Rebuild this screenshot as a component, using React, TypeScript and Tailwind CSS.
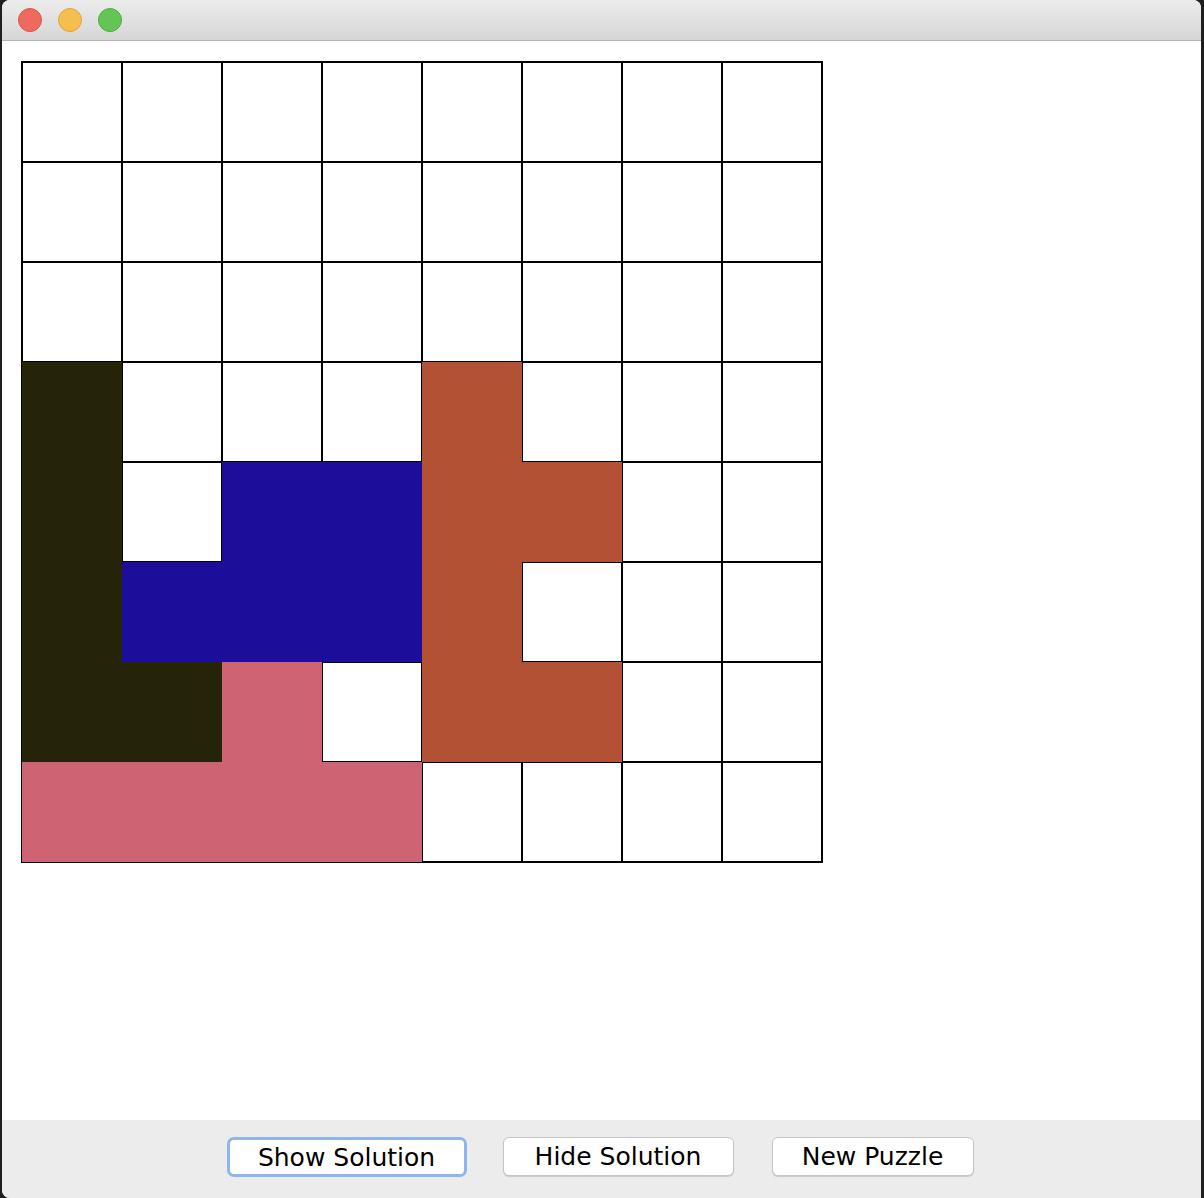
import React from "react"

// 0 = empty, 1 = dark, 2 = blue, 3 = brown, 4 = pink
const board: number[][] = [
    [0, 0, 0, 0, 0, 0, 0, 0],
    [0, 0, 0, 0, 0, 0, 0, 0],
    [0, 0, 0, 0, 0, 0, 0, 0],
    [1, 0, 0, 0, 3, 0, 0, 0],
    [1, 0, 2, 2, 3, 3, 0, 0],
    [1, 2, 2, 2, 3, 0, 0, 0],
    [1, 1, 4, 0, 3, 3, 0, 0],
    [4, 4, 4, 4, 0, 0, 0, 0],
]

const fills: Record<number, string> = {
    1: "bg-[#252308]",
    2: "bg-[#1c0d9a]",
    3: "bg-[#b25134]",
    4: "bg-[#cd6373]",
}

function Cell({ v }: { v: number }) {
    if (v === 0) {
        return <div className="h-[100px] w-[100px] border border-black bg-white" />
    }
    return <div className={`h-[100px] w-[100px] ${fills[v]}`} />
}

function TrafficLights() {
    return (
        <div className="flex items-center gap-[16px] pl-[16px]">
            <span className="h-[24px] w-[24px] rounded-full bg-[#ee6a5f] border border-[#d4574c]" />
            <span className="h-[24px] w-[24px] rounded-full bg-[#f6be4f] border border-[#dea43a]" />
            <span className="h-[24px] w-[24px] rounded-full bg-[#62c554] border border-[#4fab42]" />
        </div>
    )
}

export default function App() {
    return (
        <div
            className="flex h-[1198px] w-[1204px] bg-[#1f1f1f] pl-[2px] pr-[3px]"
            style={{ fontFamily: '"DejaVu Sans", "Liberation Sans", sans-serif' }}
        >
            <div className="flex flex-1 flex-col overflow-hidden rounded-t-[8px] rounded-bl-[8px] bg-white">
                <div className="flex h-[41px] shrink-0 items-center border-b border-[#b4b4b4] bg-gradient-to-b from-[#ececec] to-[#d6d6d6] pb-[1px]">
                    <TrafficLights />
                </div>

                <div className="flex-1 pl-[19px] pt-[20px]">
                    <div className="grid w-[802px] grid-cols-8 bg-black p-px">
                        {board.flat().map((v, i) => (
                            <Cell key={i} v={v} />
                        ))}
                    </div>
                </div>

                <div className="flex h-[78px] shrink-0 items-start justify-center bg-[#ececec] pr-[3px] pt-[17px] text-[25px] text-black">
                    <button className="flex h-[40px] w-[240px] items-center justify-center rounded-[7px] border-[3px] border-[#8db6ee] bg-white leading-none">
                        Show Solution
                    </button>
                    <button className="ml-[36px] flex h-[39px] w-[231px] items-center justify-center rounded-[6px] border border-[#c6c6c6] bg-white leading-none shadow-[0_1px_1px_rgba(0,0,0,0.15)]">
                        Hide Solution
                    </button>
                    <button className="ml-[38px] flex h-[39px] w-[202px] items-center justify-center rounded-[6px] border border-[#c6c6c6] bg-white leading-none shadow-[0_1px_1px_rgba(0,0,0,0.15)]">
                        New Puzzle
                    </button>
                </div>
            </div>
        </div>
    )
}
